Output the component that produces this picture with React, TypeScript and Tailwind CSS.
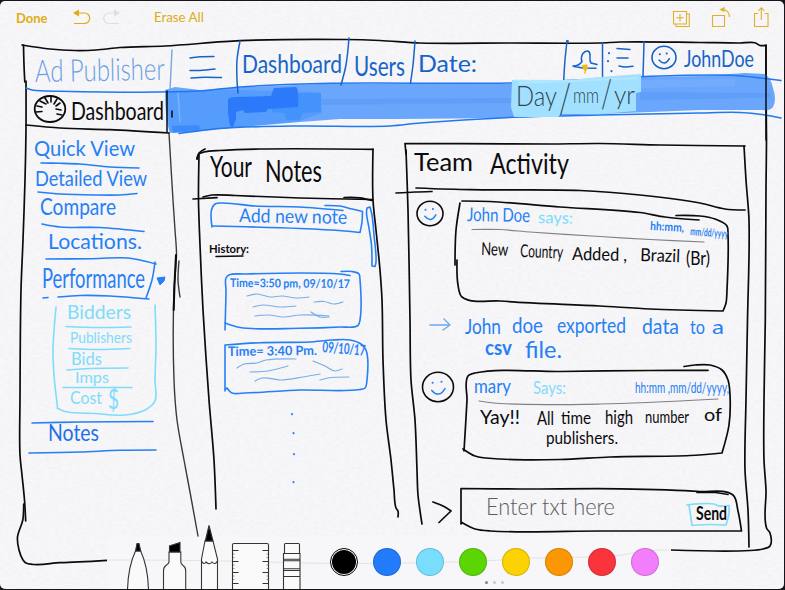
import React from "react";

const BLUE = "#2580f5";
const NAVY = "#1764c8";
const CYAN = "#7fdcfb";
const INK = "#0b0b0d";

type Point = [number, number];

/* Direction of the pen at point b; a sharp corner has none. */
function tangent(a: Point, b: Point, c: Point): Point {
  const u = [b[0] - a[0], b[1] - a[1]];
  const v = [c[0] - b[0], c[1] - b[1]];
  const lu = Math.hypot(u[0], u[1]) || 1;
  const lv = Math.hypot(v[0], v[1]) || 1;
  const cos = (u[0] * v[0] + u[1] * v[1]) / (lu * lv);
  if (cos < 0.35) return [0, 0];
  const t: Point = [u[0] / lu + v[0] / lv, u[1] / lu + v[1] / lv];
  const lt = Math.hypot(t[0], t[1]) || 1;
  return [t[0] / lt, t[1] / lt];
}

/* Smooth curve through the points of one pen stroke. */
function curve(points: string): string {
  const p = points.split(" ").map((s) => s.split(",").map(Number) as Point);
  let d = `M${p[0][0]} ${p[0][1]}`;
  for (let i = 0; i < p.length - 1; i++) {
    const b = p[i];
    const c = p[i + 1];
    const k = Math.hypot(c[0] - b[0], c[1] - b[1]) * 0.3;
    const t = i > 0 ? tangent(p[i - 1], b, c) : [0, 0];
    const u = i < p.length - 2 ? tangent(b, c, p[i + 2]) : [0, 0];
    d += `C${b[0] + t[0] * k} ${b[1] + t[1] * k} ${c[0] - u[0] * k} ${c[1] - u[1] * k} ${c[0]} ${c[1]}`;
  }
  return d;
}

function Ink({ pts, c = INK, w = 1.6, o = 1 }: { pts: string[]; c?: string; w?: number; o?: number }) {
  return (
    <g fill="none" stroke={c} strokeWidth={w} strokeLinecap="round" strokeLinejoin="round" opacity={o}>
      {pts.map((s) => (
        <path key={s} d={curve(s)} />
      ))}
    </g>
  );
}

type WordProps = { x: number; y: number; w: number; s: number; c?: string; r?: number; b?: number; children: string };

function Word({ x, y, w, s, c = BLUE, r = 0, b = 400, children }: WordProps) {
  return (
    <text
      x={x}
      y={y}
      textLength={w}
      lengthAdjust="spacingAndGlyphs"
      fontSize={s}
      fontWeight={b}
      fill={c}
      transform={`rotate(${r} ${x} ${y})`}
    >
      {children}
    </text>
  );
}

function Smile({ x, y, r, ring, face }: { x: number; y: number; r: number; ring: string; face: string }) {
  return (
    <g fill="none" strokeLinecap="round">
      <ellipse cx={x} cy={y} rx={r} ry={r - 0.8} stroke={ring} strokeWidth="1.6" />
      <path d={`M${x - r * 0.4} ${y + r * 0.22}Q${x + 1} ${y + r * 0.75} ${x + r * 0.45} ${y + r * 0.1}`} stroke={face} strokeWidth="1.5" />
      <path d={`M${x - r * 0.35} ${y - r * 0.28}h.1M${x + r * 0.22} ${y - r * 0.34}h.1`} stroke={face} strokeWidth="2" />
    </g>
  );
}

function Banner() {
  return (
    <g>
      <path d="M165 90L175 87 200 90 245 87 320 84 510 84 645 77 700 76 745 73 765 74Q771 78 773 88Q777 100 773 107Q770 111 762 110L700 110 600 114 510 118 400 119 340 119 300 122 230 128 200 131 170 133Q165 120 165 90Z" fill="#6aa7fc" />
      <path d="M166 91L230 90 320 92 322 113 300 121 230 128 170 132Z" fill="#559cfc" />
      <path d="M320 99L512 98 512 103 320 105ZM640 92L770 93 771 98 640 100Z" fill="#5a9bf8" opacity=".65" />
      <path d="M640 80L735 79 735 86 640 88Z" fill="#78aefe" opacity=".7" />
      <path d="M272 93L321 93 321 112 302 113 300 120 286 120 285 113 272 112Z" fill="#4492fb" />
      <path d="M228 99Q230 97 236 97L271 96 274 88 296 87Q299 88 298 107L268 109 266 112 245 113 243 110 236 112 236 119 233 127 230 126 228 113Z" fill="#2c7afa" />
      <path d="M172 126L198 125 201 128 198 131 173 133Z" fill="#3385f8" opacity=".75" />
      <path d="M178 92L180 122" stroke="#8abdff" strokeWidth="1.5" opacity=".7" />
    </g>
  );
}

function TopBarInk() {
  return (
    <g>
      <Ink
        w={1.7}
        pts={[
          "22,45 50,49 75,50.5 96,50 120,47.5 165,46 240,40.7 345,39.5 380,40.5 420,43 510,43 600,43 620,42 700,42.5 740,43 755,42.7 760,45.5 766,45.3",
          "766,45 766,90 766.5,140 766,187 765.3,320 764,400 764,460 766,490 766.5,528 770,533 770,546 763,549 750,550.5 671,550",
          "23.5,45 24,65 24.8,82",
          "26,81 26,130 25,180 23,240 21,290 20,400 20,455 22,475 24.5,500 25.7,521",
          "23.7,504 22.8,520 17.5,537 19,550 23,560 26,563 60,562.7 107,560.3",
          "26,125 60,128 110,129.7 169,133",
        ]}
      />
      <Ink w={1.4} o={0.8} pts={["169,133 170,150 173,200 175,230 176.5,254 174,290 174,380 177,420 184,460 190,492 198,536", "179,261 178,280 180,297"]} />
      <Ink w={2} pts={["176,255 174.5,285 173.7,310"]} />
      <Banner />
      <Ink
        c="#2079ee"
        w={1.5}
        pts={[
          "26,88 32,90 60,91.2 200,91 240,87 320,83.5 510,83 560,81 645,76.5 735,75.5 760,78 781,80.5",
          "179,133.5 220,128.5 300,126 390,126 420,123 520,117 600,115 700,113 740,112.5 765,115 781,118",
        ]}
      />
      <Ink c={INK} w={1.5} pts={["766,46 766,140", "167,91 167,132", "172,111 172,117"]} />
      <Ink c="#75a7e4" w={1.4} pts={["172,50 171,70 170,90"]} />
      <Ink
        c={NAVY}
        w={1.5}
        pts={[
          "190,58 200,56.8 214,56.5",
          "190,70.5 200,70.5 215,69",
          "191,78 205,77.2 221.5,77.6",
          "240,41 237,60 237,80 238,93",
          "349,38 346,65 341,85",
          "415,41 413,65 410.5,83",
          "567,41 565,60 563.5,84",
          "602.5,43 602.5,78",
          "644,42 643.5,60 643,76",
        ]}
      />
      <path d="M512 80L570 80 600 77 641 74 641 92 636 93 636 111 601 114 561 114 558 117 514 117 511 107Z" fill="#a1e1ff" />
      <path d="M514 80L560 81M518 83L638 78" stroke="#c1ecff" strokeWidth="2" opacity=".5" />
      <path
        d="M573 66Q579 66 582 61.5Q580.5 58 582.5 54Q585 50.5 588 51Q590.5 52.5 590 56.5Q589.5 61 591 63L597 64.5M574 66.5L583 68 596 68.2"
        fill="none"
        stroke={NAVY}
        strokeWidth="1.5"
        strokeLinecap="round"
      />
      <Ink c={NAVY} w={1.5} pts={["617,48.5 630,49.5", "617,58 628,58", "619,66 625,67 633,66.2"]} />
      <Ink c={NAVY} w={2} pts={["609,53 609,53.2", "608,61 608,61.2", "611.5,71 611.5,71.2", "567,41 568,41.3"]} />
      <path d="M582 65L587 64.5 588 68 586 71 585.5 74 584.5 74 584.5 70 583 69Z" fill="#f1b90e" />
      <Smile x={664} y={57.5} r={12} ring={NAVY} face={NAVY} />
      <Word x={35} y={82} w={130} s={31} c="#699fe2" b={300} r={-1}>Ad Publisher</Word>
      <Word x={242} y={73} w={100} s={25} c={NAVY}>Dashboard</Word>
      <Word x={354} y={76} w={51} s={27} c={NAVY}>Users</Word>
      <Word x={418} y={72} w={59} s={24} c={NAVY}>Date:</Word>
      <Word x={684} y={67} w={70} s={24} c={NAVY}>JohnDoe</Word>
      <Word x={516} y={106} w={41} s={27} c="#30444e" b={300}>Day</Word>
      <Word x={559} y={113} w={12} s={42} c="#30444e" b={300}>/</Word>
      <Word x={573} y={103} w={26} s={22} c="#30444e" b={300}>mm</Word>
      <Word x={601} y={108} w={11} s={40} c="#30444e" b={300}>/</Word>
      <Word x={614} y={104} w={21} s={26} c="#30444e" b={300}>yr</Word>
      <ellipse cx="50" cy="109" rx="15.3" ry="13" fill="none" stroke={INK} strokeWidth="1.8" />
      <Ink
        w={1.6}
        pts={["36,112 42,111.5", "37,106 42,107", "40,101 46,104", "45,98 48,103", "51,97 51,102", "57,99 54,104", "60,103 56,106", "61,110 56,109", "62,115 57,114"]}
      />
      <Word x={71} y={120} w={93} s={25} c={INK}>Dashboard</Word>
    </g>
  );
}

function SidebarInk() {
  return (
    <g>
      <Word x={34} y={156} w={101} s={21}>Quick View</Word>
      <Word x={35} y={186} w={112} s={22}>Detailed View</Word>
      <Word x={40} y={215} w={76} s={23}>Compare</Word>
      <Word x={48} y={249} w={94} s={22}>Locations.</Word>
      <Word x={42} y={288} w={103} s={26}>Performance</Word>
      <Word x={48} y={441} w={51} s={23} c="#1f70e8">Notes</Word>
      <Ink
        c={BLUE}
        w={1.6}
        pts={[
          "41,163 60,163.3 80,164 110,167 139,168",
          "38,192 60,194 95,195 120,195 137,193.5",
          "42,224 60,227 100,227.5 144,231.5",
          "46,259 90,258.7 128,258 140,260 156,264",
          "155,262 152,280 146,298",
          "58,297 80,295.5 110,296 149,299",
          "43,298 48,297.5",
          "32,423 80,422 153,421.5",
          "29,453 80,452 120,450.3 156,450",
        ]}
      />
      <path d="M157 278L165 277 164 281 160 285Z" fill={BLUE} stroke={BLUE} strokeLinejoin="round" />
      <Ink
        c={CYAN}
        w={1.6}
        pts={[
          "56,307 53,350 54,375 57.5,407",
          "57,408 65,411.5 95,413.5 125,415 145,410 155,401 155,380 156,345 155,305",
          "66,326.5 98,327.5 131,327",
          "69,348.5 98,349.5 130,348.5",
          "67,370 90,368.5 128,368",
          "63,387.5 132,387.5",
        ]}
      />
      <Word x={67} y={319} w={64} s={20} c={CYAN}>Bidders</Word>
      <Word x={70} y={343} w={62} s={16} c={CYAN}>Publishers</Word>
      <Word x={71} y={365} w={31} s={18} c={CYAN}>Bids</Word>
      <Word x={75} y={383} w={34} s={15} c={CYAN}>Imps</Word>
      <Word x={70} y={404} w={32} s={18} c={CYAN}>Cost</Word>
      <Word x={108} y={409} w={11} s={26} c={CYAN}>$</Word>
    </g>
  );
}

function NotesInk() {
  return (
    <g>
      <Ink
        w={1.7}
        pts={[
          "197,159 199,154 204,152 220,150.5 260,149 373,149.3",
          "205,149 199,153 197,159",
          "373,149 373,200 376,230 380,270 382,300 383,360 386,420 391,460 394,490 396,508 398,511 398,517",
          "199,155 198.5,200 200,245 203,310 209,400 214,460 216,509",
          "193,199 217,197.7",
          "203,197 212,195 235,195.5 300,198 373,199.5",
          "344,197.5 360,197.8 372,200.5",
        ]}
      />
      <Word x={210} y={177} w={42} s={28} c={INK}>Your</Word>
      <Word x={265} y={182} w={57} s={30} c={INK}>Notes</Word>
      <Ink
        c={BLUE}
        w={1.6}
        pts={[
          "212,227 211.5,210 215,204 222,203 255,206 300,207 343,210.5",
          "325,205.5 340,206 352,209 362.5,211.5 362,222 360,232.5 345,231 300,228.5 212,226",
          "367,208 370,207 372,215 374,235 376,262 375,266.5 372,266 371.5,245 369,228 366.5,213 367,208",
          "225,330 226,290 226,278 229,275 245,274 340,274 350,275.5",
          "341,271.5 352,271.5 359,274 360,280 360,320 358,325.5 340,327 300,328.3 240,327.5 225,323",
          "225,391 225,345 260,342.7 310,342 332,340 350,340 361,344 366,350 367,380 365,388 360,389.5 300,390 245,393 232,393 227,388 225,390",
        ]}
      />
      <Word x={239} y={222} w={108} s={19} r={1}>Add new note</Word>
      <Word x={209} y={253} w={40} s={12} c={INK} b={700}>History:</Word>
      <Ink w={1.5} pts={["216,256.5 243,256"]} />
      <Word x={230} y={287} w={120} s={12} b={700} r={0.5}>Time=3:50 pm, 09/10/17</Word>
      <Word x={228} y={356} w={89} s={13} b={700} r={-0.7}>Time= 3:40 Pm.</Word>
      <Word x={322} y={352} w={43} s={15} b={700} r={5}>09/10/17</Word>
      <Ink
        c="#79aeea"
        w={1.2}
        pts={[
          "247,296 257,294 270,297 282,296 296,298 309,297",
          "314,302 324,301.5 334,304 343,302",
          "253,307 263,305 280,307 296,306",
          "255,316 269,315 283,317 300,315 329,316",
          "311,312 320,317 329,317",
          "237,368 244,364 257,363 266,360 296,359",
          "250,372 268,371 288,366",
          "313,361 325,366 335,371 342,369",
          "255,381 262,378 281,380 303,377 320,374",
          "320,380 328,378 349,377",
        ]}
      />
      <Ink c={BLUE} w={2} pts={["292,414 292,414.2", "293.5,433 293.5,433.2", "294,454 294,454.2", "293.5,482 293.5,482.2"]} />
    </g>
  );
}

function TeamInk() {
  return (
    <g>
      <Ink
        w={1.7}
        pts={[
          "406,154 405,143.5 460,143.7 550,144 600,143.5 660,145 745,146",
          "744,146 746,180 749,220 747.5,320 746,400 745,470 748,510 749,547",
          "406,150 408,210 410,320 411,380 415,420 417,470 418,495 422,524",
          "396,193 415,192 432,191.5",
          "416,188 470,189.7 580,190.5 640,195 700,203 725,209 745,210",
          "462,201 490,201.5 560,207 640,212.5 665,217 699,220",
          "676,215.5 700,216 715,219 727,226 728,235 727,290 726,303 723,311 650,309 600,306 500,301 462,297 458,285 457,260",
          "455,265 456,230 460,203",
          "464,451 467,400 468,376 475,373 560,371.5 650,370.5 708,370.3",
          "684,366.5 695,365 710,365 722,370 728,380 730,395 729,425 722,453 690,455.5 610,457 560,459.5 500,459 475,456 463,449",
          "461,524 461,488.5 520,489 620,488.8 700,491.5 733,495 738,511 741.5,531 600,531 490,531 475,529 461,522",
          "433,502 445,507 451,511 439,522.5",
          "697,492.5 715,492.5 728,494.5",
        ]}
      />
      <Word x={414} y={171} w={59} s={25} c={INK}>Team</Word>
      <Word x={490} y={174} w={79} s={29} c={INK}>Activity</Word>
      <Smile x={430} y={213.5} r={13} ring={INK} face={BLUE} />
      <Smile x={438} y={387} r={15.5} ring={INK} face={BLUE} />
      <Ink c="#818185" w={1.2} pts={["472,229.5 500,229.5 530,232 600,236.5 650,239.5 704,242", "479,401 500,403.5 600,404 718,399"]} />
      <Word x={467} y={221} w={63} s={19} r={1}>John Doe</Word>
      <Word x={538} y={223} w={35} s={16} c={CYAN} r={1}>says:</Word>
      <Word x={650} y={230} w={34} s={12} b={700} r={3}>hh:mm,</Word>
      <Word x={690} y={235} w={38} s={11} b={700} r={4}>mm/dd/yyyy</Word>
      <Word x={481} y={255} w={27} s={18} c={INK} r={2}>New</Word>
      <Word x={520} y={257} w={43} s={18} c={INK} r={2}>Country</Word>
      <Word x={572} y={260} w={55} s={18} c={INK} r={1}>Added ,</Word>
      <Word x={640} y={261} w={40} s={18} c={INK} r={2}>Brazil</Word>
      <Word x={686} y={265} w={24} s={19} c={INK}>(Br)</Word>
      <Ink c="#6aa9ef" w={1.3} pts={["430,325 449,325", "444,319 450,325 443,330"]} />
      <Word x={465} y={334} w={36} s={22}>John</Word>
      <Word x={512} y={333} w={31} s={21}>doe</Word>
      <Word x={557} y={333} w={69} s={21}>exported</Word>
      <Word x={642} y={334} w={37} s={21}>data</Word>
      <Word x={690} y={334} w={15} s={20}>to</Word>
      <Word x={712} y={334} w={12} s={20}>a</Word>
      <Word x={485} y={355} w={27} s={20} b={700}>csv</Word>
      <Word x={525} y={358} w={37} s={23}>file.</Word>
      <Word x={474} y={393} w={37} s={20}>mary</Word>
      <Word x={533} y={394} w={33} s={17} c={CYAN}>Says:</Word>
      <Word x={635} y={393} w={94} s={16}>hh:mm ,mm/dd/yyyy,</Word>
      <Word x={480} y={424} w={40} s={19} c={INK}>Yay!!</Word>
      <Word x={537} y={425} w={17} s={19} c={INK}>All</Word>
      <Word x={561} y={424} w={30} s={18} c={INK}>time</Word>
      <Word x={605} y={424} w={28} s={19} c={INK}>high</Word>
      <Word x={645} y={423} w={44} s={18} c={INK}>number</Word>
      <Word x={704} y={421} w={18} s={18} c={INK}>of</Word>
      <Word x={546} y={444} w={72} s={17} c={INK}>publishers.</Word>
      <Word x={486} y={515} w={129} s={24} c="#5c5c60" b={300}>Enter txt here</Word>
      <Ink c={CYAN} w={1.7} pts={["687,505 695,504 714,504 719,506 729,505.5 729,513 726,525 710,524.5 692,525.5 690.5,515 689,505"]} />
      <Word x={696} y={520} w={31} s={18} c={INK} b={700}>Send</Word>
    </g>
  );
}

function Toolbar() {
  return (
    <header className="relative z-10 flex h-[34px] items-center text-[#dfac16]">
      <button className="ml-4 w-[56px] text-left text-[13px] font-bold leading-none">Done</button>
      <svg className="h-5 w-[52px]" viewBox="72 8 52 20" fill="none" strokeWidth="1.2">
        <path d="M75 13H84.5A4.8 4.8 0 0 1 84.5 23.5H74" stroke="#dfac16" />
        <path d="M73 13L79 9.5V16.5Z" fill="#dfac16" />
        <path d="M117 13H109A4.8 4.8 0 0 0 109 23.5H119" stroke="#dedde1" />
        <path d="M120 13L114 9.5V16.5Z" fill="#dedde1" />
      </svg>
      <button className="ml-[30px] text-[13.3px] leading-none">Erase All</button>
      <svg className="ml-auto mr-3 h-6 w-[102px]" viewBox="671 6 102 24" fill="none" stroke="#dfb02c" strokeWidth="1.1">
        <path d="M674.5 11.5H687.5V24H674.5ZM677 24.3V26.5H690.3V14H688M681 14V21.5M677.3 17.8H684.7" />
        <path d="M713.5 15.5H725.5V26.5H713.5ZM723 9.5Q730 9.5 730.5 17" />
        <path d="M720.5 9.5L725.5 6.8V12.2Z" fill="#dfb02c" stroke="none" />
        <path d="M759 13.5H755.5V26.5H769V13.5H765.5M762.3 20V8M759.3 11L762.3 7.7L765.3 11" />
      </svg>
    </header>
  );
}

function PenTools() {
  return (
    <svg className="h-[68px] w-[178px] shrink-0" viewBox="125 521 178 68" fill="#fafafa" stroke="#343437" strokeWidth="1.1">
      <path d="M135.5 551Q128 567 127.5 590H148.5Q148 567 140.7 551Z" />
      <path d="M135.5 551L137 543.5H139L140.7 551Z" fill="#000" />
      <path d="M169 552V562Q168.5 564 166 565.5Q163.5 567 163.5 571V590H185.7V571Q185.7 567 183 565.5Q180.8 564 180.8 562V552Z" />
      <path d="M169.5 552V546L180 542.5V552Z" fill="#000" />
      <path d="M205 541L201.5 559V590H217.5V559L213 541Z" />
      <path d="M205.3 541L209 525.5L213 541Z" fill="#000" />
      <path d="M201.5 561Q204 565.5 206 562Q209.5 565.5 212 562Q215 565.5 217.5 561" fill="none" />
      <path d="M232.5 590V545Q232.5 543.5 234 543.5H267Q268.5 543.5 268.5 545V590" />
      <path d="M232.5 550.5h6M232.5 561.5h6M232.5 572.5h6M232.5 583.5h6M268.5 550.5h-6M268.5 561.5h-6M268.5 572.5h-6M268.5 583.5h-6" />
      <path d="M232.5 554h2M232.5 557.5h2M232.5 565h2M232.5 568.5h2M232.5 576h2M232.5 579.5h2M268.5 554h-2M268.5 557.5h-2M268.5 565h-2M268.5 568.5h-2M268.5 576h-2M268.5 579.5h-2" strokeWidth=".5" />
      <path d="M284.5 553V544.5Q284.5 543.5 285.5 543.5H298.5Q299.5 543.5 299.5 544.5V553M283.5 590V553.5H300V590M284 559.2H300M284 560.8H300M284 568.8H300M284 570.5H300M284 576.5H300" />
    </svg>
  );
}

const swatches = ["bg-[#227bfb]", "bg-[#79defe]", "bg-[#5bd503]", "bg-[#fcd202]", "bg-[#fb9702]", "bg-[#f9343c]", "bg-[#f37efb]"];

function Tray() {
  return (
    <footer className="relative z-10 ml-[107px] flex h-[68px] w-[564px] items-start bg-linear-to-b from-transparent from-[16px] to-[#f7f6f8] to-[16px] pl-[18px]">
      <svg className="absolute inset-0 h-full w-full" viewBox="107 521 564 68" fill="none" stroke="#e3e2e5">
        <path d="M107 560Q220 560 300 563Q440 565 530 558Q590 558 622 555Q650 549 671 550" />
      </svg>
      <div className="relative z-10">
        <PenTools />
      </div>
      <div className="relative z-10 ml-[27px] mt-[27px] flex flex-col items-center">
        <div className="flex gap-[15px]">
          <span className="flex size-7 items-center justify-center rounded-full border border-black bg-white">
            <span className="size-6 rounded-full bg-black" />
          </span>
          {swatches.map((s) => (
            <span key={s} className={`size-7 rounded-full border border-black/15 ${s}`} />
          ))}
        </div>
        <div className="mt-[5px] flex gap-[5px]">
          <i className="size-[3px] rounded-full bg-[#858587]" />
          <i className="size-[3px] rounded-full bg-[#c8c8ca]" />
          <i className="size-[3px] rounded-full bg-[#c8c8ca]" />
        </div>
      </div>
    </footer>
  );
}

export default function App() {
  return (
    <div className="h-[590px] w-[785px] overflow-hidden bg-[#15151a] pb-px pr-px pt-px font-['Lato','Open_Sans',sans-serif]">
      <main className="relative flex h-[588px] flex-col justify-between overflow-hidden rounded-[5px] bg-[#f7f6f8]">
        <svg className="absolute -top-px left-0 h-[590px] w-[785px]" viewBox="0 0 785 590">
          <filter id="paper" x="0" y="0" width="100%" height="100%">
            <feTurbulence type="fractalNoise" baseFrequency=".22 .4" numOctaves="2" seed="4" />
            <feColorMatrix values="0 0 0 0 .5  0 0 0 0 .5  0 0 0 0 .55  .16 0 0 0 -.055" />
          </filter>
          <rect width="785" height="590" filter="url(#paper)" />
          <TopBarInk />
          <SidebarInk />
          <NotesInk />
          <TeamInk />
        </svg>
        <Toolbar />
        <Tray />
      </main>
    </div>
  );
}
